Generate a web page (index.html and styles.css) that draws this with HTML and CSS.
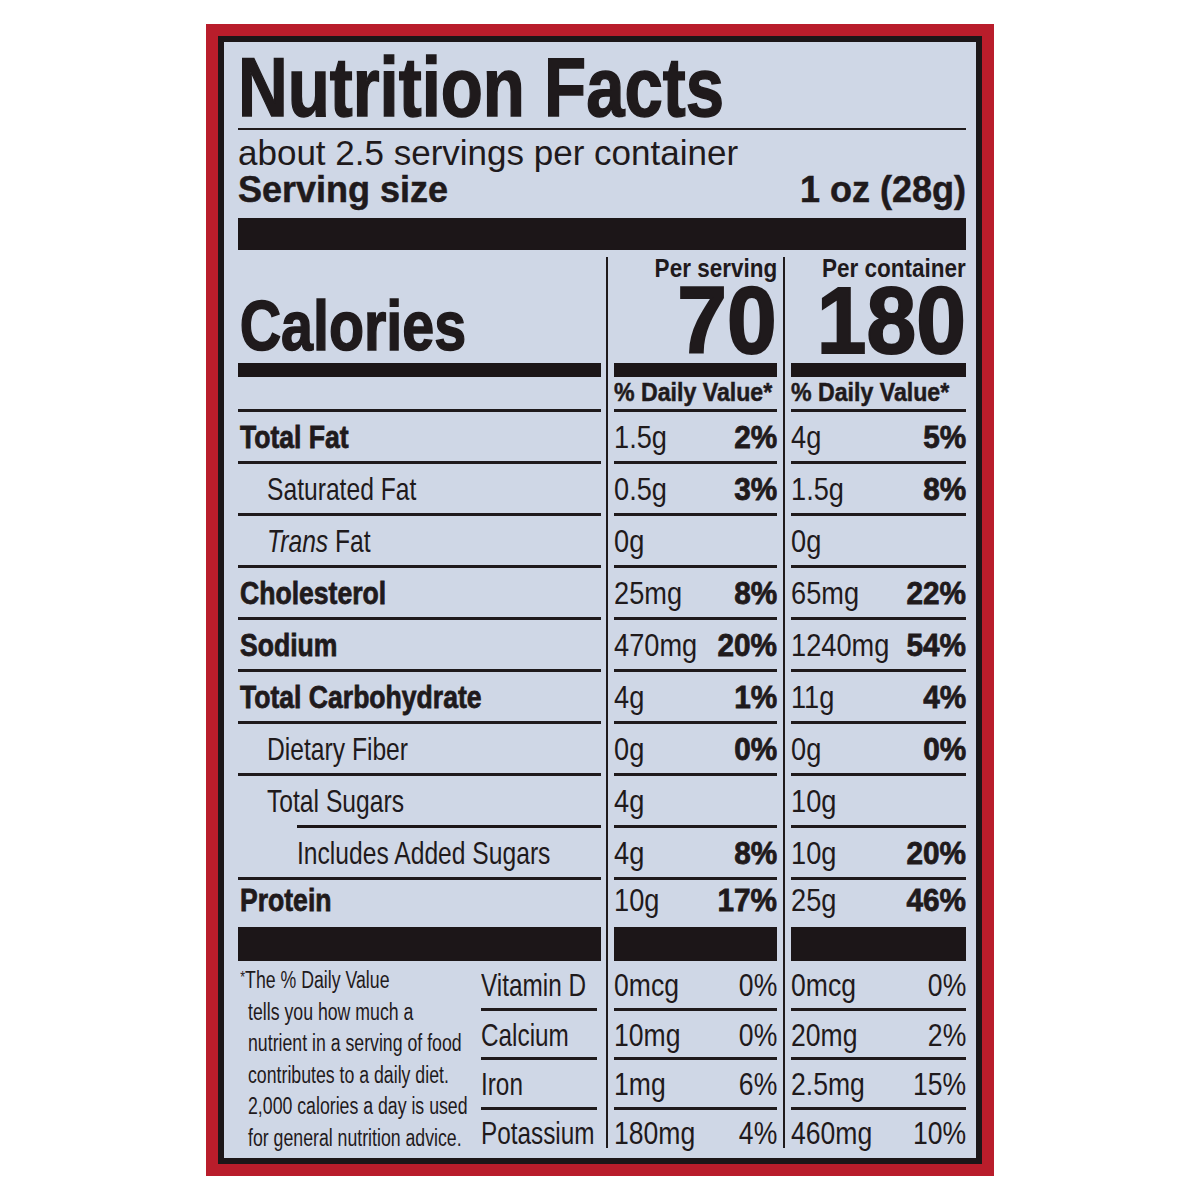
FILE: index.html
```html
<!DOCTYPE html>
<html lang="en">
<head>
  <meta charset="UTF-8">
  <meta name="viewport" content="width=device-width, initial-scale=1.0">
  <title>Nutrition Facts</title>
  <link rel="stylesheet" href="styles.css">
</head>
<body>

<div class="pack">
  <div class="label">
    <h1 class="title"><span>Nutrition Facts</span></h1>
    <p class="servings">about 2.5 servings per container</p>
    <div class="serving-size"><span>Serving size</span><span>1 oz (28g)</span></div>
    <div class="bar-heavy"></div>

    <div class="table">
      <!-- nombres -->
      <div class="col col-names">
        <div class="head"><span class="calories">Calories</span></div>
        <div class="bar"></div>
        <div class="dv"></div>
        <div class="row"><b>Total Fat</b></div>
        <div class="row sub"><span>Saturated Fat</span></div>
        <div class="row sub"><span><i>Trans</i> Fat</span></div>
        <div class="row"><b>Cholesterol</b></div>
        <div class="row"><b>Sodium</b></div>
        <div class="row"><b>Total Carbohydrate</b></div>
        <div class="row sub"><span>Dietary Fiber</span></div>
        <div class="row sub short-rule"><span>Total Sugars</span></div>
        <div class="row sub2"><span>Includes Added Sugars</span></div>
        <div class="row last"><b>Protein</b></div>
        <div class="bar-fat"></div>
        <div class="foot">
          <div class="note"><p class="note-text"><span class="star">*</span>The % Daily Value<br>tells you how much a<br>nutrient in a serving of food<br>contributes to a daily diet.<br>2,000 calories a day is used<br>for general nutrition advice.</p></div>
          <div class="vitamins">
            <div class="vrow"><span>Vitamin D</span></div>
            <div class="vrow calc"><span>Calcium</span></div>
            <div class="vrow"><span>Iron</span></div>
            <div class="vrow end"><span>Potassium</span></div>
          </div>
        </div>
      </div>

      <!-- por porcion -->
      <div class="col col-vals col-serv">
        <div class="head">
          <div class="per"><span>Per serving</span></div>
          <div class="kcal"><span>70</span></div>
        </div>
        <div class="bar"></div>
        <div class="dv"><span>% Daily Value*</span></div>
        <div class="row"><span>1.5g</span><b>2%</b></div>
        <div class="row"><span>0.5g</span><b>3%</b></div>
        <div class="row"><span>0g</span></div>
        <div class="row"><span>25mg</span><b>8%</b></div>
        <div class="row"><span>470mg</span><b>20%</b></div>
        <div class="row"><span>4g</span><b>1%</b></div>
        <div class="row"><span>0g</span><b>0%</b></div>
        <div class="row"><span>4g</span></div>
        <div class="row"><span>4g</span><b>8%</b></div>
        <div class="row last"><span>10g</span><b>17%</b></div>
        <div class="bar-fat"></div>
        <div class="vrow"><span>0mcg</span><em>0%</em></div>
        <div class="vrow calc"><span>10mg</span><em>0%</em></div>
        <div class="vrow"><span>1mg</span><em>6%</em></div>
        <div class="vrow end"><span>180mg</span><em>4%</em></div>
      </div>

      <!-- por envase -->
      <div class="col col-vals col-cont">
        <div class="head">
          <div class="per"><span>Per container</span></div>
          <div class="kcal"><span>180</span></div>
        </div>
        <div class="bar"></div>
        <div class="dv"><span>% Daily Value*</span></div>
        <div class="row"><span>4g</span><b>5%</b></div>
        <div class="row"><span>1.5g</span><b>8%</b></div>
        <div class="row"><span>0g</span></div>
        <div class="row"><span>65mg</span><b>22%</b></div>
        <div class="row"><span>1240mg</span><b>54%</b></div>
        <div class="row"><span>11g</span><b>4%</b></div>
        <div class="row"><span>0g</span><b>0%</b></div>
        <div class="row"><span>10g</span></div>
        <div class="row"><span>10g</span><b>20%</b></div>
        <div class="row last"><span>25g</span><b>46%</b></div>
        <div class="bar-fat"></div>
        <div class="vrow"><span>0mcg</span><em>0%</em></div>
        <div class="vrow calc"><span>20mg</span><em>2%</em></div>
        <div class="vrow"><span>2.5mg</span><em>15%</em></div>
        <div class="vrow end"><span>460mg</span><em>10%</em></div>
      </div>
    </div>
  </div>
</div>

</body>
</html>
```

FILE: styles.css
```css
body {
  margin: 0;
  background: #fff;
  color: #1f1a1c;
  font-family: "Liberation Sans", Arial, sans-serif;
}

/* marco rojo del envase */
.pack {
  width: 788px;
  margin: 24px auto 0;
  padding: 12px;
  box-sizing: border-box;
  background: #b91d2b;
}

.label {
  border: 6px solid #1c1618;
  background: #cfd7e6;
  padding: 3px 10px 10px 14px;
}

/* la letra de la etiqueta es condensada: se estrecha con scaleX */
.title {
  margin: 0;
  height: 83px;
  border-bottom: 2px solid;
  white-space: nowrap;
  font-weight: bold;
  font-size: 84px;
  line-height: 84px;
}

.title span {
  display: inline-block;
  transform: scaleX(0.82);
  transform-origin: left;
  -webkit-text-stroke: 1.5px #1f1a1c; /* mas negra */
}

.servings {
  margin: 5px 0 0;
  font-size: 35px;
  line-height: 36px;
}

.serving-size {
  display: flex;
  justify-content: space-between;
  margin-top: 1px;
  font-weight: bold;
  font-size: 36px;
  line-height: 36px;
  -webkit-text-stroke: 0.5px #1f1a1c;
}

.bar-heavy {
  height: 32px;
  margin-top: 10px;
  background: #1c1618;
}

/* tabla de tres columnas */
.table {
  display: flex;
  margin-top: 7px;
  white-space: nowrap;
}

.col-names {
  width: 363px;
}

.col-vals {
  border-left: 2px solid;
  padding-left: 6px;
}

.col-serv {
  width: 163px;
  margin-left: 5px;
}

.col-cont {
  width: 175px;
  margin-left: 6px;
}

.head {
  height: 106px;
}

.calories {
  display: block;
  padding: 34px 0 0 2px;
  font-weight: bold;
  font-size: 70px;
  line-height: 70px;
  transform: scaleX(0.82);
  transform-origin: left;
  -webkit-text-stroke: 1.5px #1f1a1c;
}

.per {
  height: 24px;
  text-align: right;
  font-weight: bold;
  font-size: 25px;
  line-height: 22px;
}

.per span {
  display: inline-block;
  transform: scaleX(0.9);
  transform-origin: right;
}

.kcal {
  text-align: right;
  font-weight: bold;
  font-size: 94px;
  line-height: 80px;
}

.kcal span {
  display: inline-block;
  transform: scaleX(0.95);
  transform-origin: right;
  -webkit-text-stroke: 2px #1f1a1c;
}

.bar {
  height: 14px;
  background: #1c1618;
}

.bar-fat {
  height: 34px;
  background: #1c1618;
}

.dv {
  box-sizing: border-box;
  height: 35px;
  padding-top: 2px;
  border-bottom: 3px solid;
  font-weight: bold;
  font-size: 26px;
  line-height: 27px;
}

.dv span {
  display: inline-block;
  transform: scaleX(0.89);
  transform-origin: left;
  -webkit-text-stroke: 0.5px #1f1a1c;
}

.row {
  box-sizing: border-box;
  height: 52px;
  padding-top: 7px;
  border-bottom: 3px solid;
  display: flex;
  justify-content: space-between;
  align-items: baseline;
  font-size: 32px;
  line-height: 36px;
}

.col-names .row {
  padding-left: 2px;
}

.col-names .row b {
  transform: scaleX(0.83);
  transform-origin: left;
  -webkit-text-stroke: 0.8px #1f1a1c;
}

.col-names .row span {
  transform: scaleX(0.77);
  transform-origin: left;
}

.col-vals .row span {
  flex-shrink: 1;
  min-width: 0;
  transform: scaleX(0.85);
  transform-origin: left;
}

.col-vals .row b {
  flex-shrink: 0;
  transform: scaleX(0.93);
  transform-origin: right;
  -webkit-text-stroke: 0.8px #1f1a1c;
}

.row.sub {
  padding-left: 29px;
}

.row.sub2 {
  padding-left: 59px;
}

/* la linea bajo Total Sugars empieza en la sangria */
.row.short-rule {
  border-bottom-color: transparent;
  background: linear-gradient(#1c1618, #1c1618) no-repeat;
  background-origin: border-box;
  background-position: 59px 100%;
  background-size: calc(100% - 59px) 3px;
}

.row.last {
  height: 47px;
  padding-top: 2px;
  border-bottom: 0;
}

/* vitaminas y minerales */
.vrow {
  box-sizing: border-box;
  height: 50px;
  padding-top: 6px;
  border-bottom: 3px solid;
  display: flex;
  justify-content: space-between;
  align-items: baseline;
  font-size: 32px;
  line-height: 36px;
}

.vrow span {
  flex-shrink: 1;
  min-width: 0;
  transform: scaleX(0.83);
  transform-origin: left;
}

.vrow em {
  flex-shrink: 0;
  font-style: normal;
  transform: scaleX(0.83);
  transform-origin: right;
}

.vrow.calc {
  height: 49px;
}

.vrow.end {
  height: 38px;
  padding-top: 5px;
  border-bottom: 0;
}

.foot {
  display: flex;
  height: 187px;
}

.note {
  width: 243px;
}

.note-text {
  margin: 0;
  padding: 1px 0 0 13px;
  font-size: 23px;
  line-height: 31.6px;
  transform: scaleX(0.77);
  transform-origin: left top;
}

.star {
  margin-left: -10px;
  font-size: 16px;
  vertical-align: 5px;
}

.vitamins {
  width: 116px;
  margin-left: auto;
  margin-right: 4px;
}

.vitamins .vrow span {
  transform: scaleX(0.76);
}
```
